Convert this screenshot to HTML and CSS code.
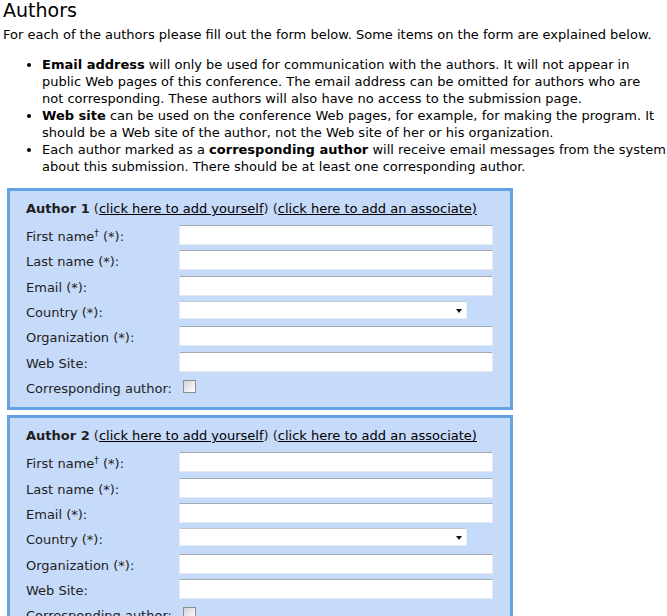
FILE: index.html
```html
<!DOCTYPE html>
<html lang="en">
<head>
<meta charset="utf-8">
<title>Authors</title>
<link rel="stylesheet" href="styles.css">
</head>
<body>
<h1 class="title">Authors</h1>
<p class="intro">For each of the authors please fill out the form below. Some items on the form are explained below.</p>
<ul class="notes">
  <li><b>Email address</b> will only be used for communication with the authors. It will not appear in public Web pages of this conference. The email address can be omitted for authors who are not&nbsp;corresponding. These authors will also have no access to the submission page.</li>
  <li><b>Web site</b> can be used on the conference Web pages, for example, for making the program. It should be a Web site of the author, not the Web site of her or his organization.</li>
  <li>Each author marked as a <b>corresponding author</b> will receive email messages from the system about this submission. There should be at least one corresponding author.</li>
</ul>

<div class="author">
  <div class="author-head"><b>Author 1</b> (<a href="#">click here to add yourself</a>) (<a href="#">click here to add an associate)</a></div>
  <div class="rows">
    <label class="lbl">First name<sup>†</sup> (*):</label><input class="field" type="text">
    <label class="lbl">Last name (*):</label><input class="field" type="text">
    <label class="lbl">Email (*):</label><input class="field" type="text">
    <label class="lbl">Country (*):</label><span class="select-wrap"><select class="select"><option></option></select></span>
    <label class="lbl">Organization (*):</label><input class="field" type="text">
    <label class="lbl">Web Site:</label><input class="field" type="text">
    <label class="lbl">Corresponding author:</label><input class="check" type="checkbox">
  </div>
</div>

<div class="author author-next">
  <div class="author-head"><b>Author 2</b> (<a href="#">click here to add yourself</a>) (<a href="#">click here to add an associate)</a></div>
  <div class="rows">
    <label class="lbl">First name<sup>†</sup> (*):</label><input class="field" type="text">
    <label class="lbl">Last name (*):</label><input class="field" type="text">
    <label class="lbl">Email (*):</label><input class="field" type="text">
    <label class="lbl">Country (*):</label><span class="select-wrap"><select class="select"><option></option></select></span>
    <label class="lbl">Organization (*):</label><input class="field" type="text">
    <label class="lbl">Web Site:</label><input class="field" type="text">
    <label class="lbl">Corresponding author:</label><input class="check" type="checkbox">
  </div>
</div>
</body>
</html>
```
FILE: styles.css
```css
html, body {
  background: #ffffff;
}
body {
  margin: 0;
  padding: 0 0 20px 3px;
  font-family: "DejaVu Sans", sans-serif;
  font-size: 13px;
  line-height: 17px;
  color: #000;
}
.title {
  margin: 0;
  font-size: 19px;
  line-height: 20px;
  font-weight: normal;
}
.intro {
  margin: 6px 0 0;
}
.notes {
  margin: 13px 0 0;
  padding-left: 39px;
}
.author {
  box-sizing: border-box;
  width: 506px;
  margin: 13px 0 0 4px;
  border: 3px solid #63a2e3;
  background: #c6daf9;
  padding: 9px 16px 7px;
  color: #1e1e1e;
}
.author-next {
  margin-top: 5px;
}
.author-head {
  margin-bottom: 6px;
  white-space: nowrap;
}
.author-head a {
  color: #000;
  text-decoration: underline;
}
.rows {
  display: grid;
  grid-template-columns: 153px 314px;
  grid-auto-rows: 25.33px;
  align-items: start;
}
.lbl {
  margin-top: 5px;
  white-space: nowrap;
}
.lbl sup {
  font-size: 9px;
  line-height: 0;
  vertical-align: 5px;
}
.field {
  box-sizing: border-box;
  width: 314px;
  height: 20px;
  margin: 2px 0 0;
  padding: 0 2px;
  border: 1px solid #e4eaf3;
  border-top-color: #a2a8b0;
  background: #fff;
  font: inherit;
  outline: none;
}
.select-wrap {
  position: relative;
  display: block;
  width: 288px;
  height: 18px;
  margin-top: 2px;
}
.select {
  -webkit-appearance: none;
  appearance: none;
  box-sizing: border-box;
  display: block;
  width: 288px;
  height: 18px;
  margin: 0;
  border: 1px solid #e8edf5;
  border-top-color: #c2c8d0;
  background: #fff;
  font: inherit;
  outline: none;
}
.select-wrap::after {
  content: "";
  position: absolute;
  right: 5px;
  top: 8px;
  border-left: 3.5px solid transparent;
  border-right: 3.5px solid transparent;
  border-top: 4px solid #111;
}
.check {
  -webkit-appearance: none;
  appearance: none;
  box-sizing: border-box;
  width: 13px;
  height: 13px;
  margin: 5px 0 0 4px;
  border: 1px solid #8e8f8f;
  background: linear-gradient(135deg, #d4d4d4 0%, #f2f2f2 70%, #ffffff 100%);
}
```
